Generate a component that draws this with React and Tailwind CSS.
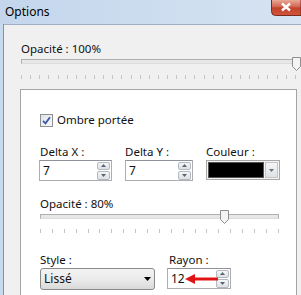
const Ticks = ({ count, className }) => (
  <div className={"flex justify-between " + className}>
    {Array.from({ length: count }).map((_, i) => (
      <div key={i} className="w-px h-[4px] bg-[#c4c4c4]" />
    ))}
  </div>
);

const Thumb = () => (
  <svg width="9" height="14" viewBox="0 0 9 14">
    <path d="M0.5 0.5 H8.5 V9.5 L4.5 13.5 L0.5 9.5 Z" fill="#f4f4f4" stroke="#8e8f8f" />
  </svg>
);

const Spinner = () => (
  <div className="flex flex-col w-[13px] h-[18px] gap-px">
    <div className="flex-1 flex items-center justify-center border border-[#b4b9c0] rounded-[2px] bg-linear-to-b from-[#f5f6f7] to-[#dde1e6]">
      <svg width="5" height="3" viewBox="0 0 5 3"><path d="M0 3 L2.5 0 L5 3 Z" fill="#5a6470" /></svg>
    </div>
    <div className="flex-1 flex items-center justify-center border border-[#b4b9c0] rounded-[2px] bg-linear-to-b from-[#f5f6f7] to-[#dde1e6]">
      <svg width="5" height="3" viewBox="0 0 5 3"><path d="M0 0 L2.5 3 L5 0 Z" fill="#5a6470" /></svg>
    </div>
  </div>
);

const NumBox = ({ value, width, children }) => (
  <div className={"relative flex items-center justify-between h-[21px] border border-[#abadb3] border-t-[#8e939b] bg-white pl-[3px] pr-px " + width}>
    <span className="leading-none text-[12px]">{value}</span>
    {children}
    <Spinner />
  </div>
);

const CloseButton = () => (
  <svg className="absolute top-0 right-0" width="30" height="16" viewBox="0 0 30 16">
    <defs>
      <linearGradient id="cb" x1="0" y1="0" x2="0" y2="1">
        <stop offset="0" stopColor="#e9a796" />
        <stop offset="0.45" stopColor="#d0654f" />
        <stop offset="0.5" stopColor="#c3412a" />
        <stop offset="1" stopColor="#d2553c" />
      </linearGradient>
    </defs>
    <path d="M0.5 0 V11.5 Q0.5 15.5 4.5 15.5 H30 V0" fill="url(#cb)" stroke="#7a2a1e" />
    <path d="M11 3.5 L19 10.5 M19 3.5 L11 10.5" stroke="#fff" strokeWidth="2.4" />
  </svg>
);

export default function App() {
  return (
    <div className="w-[301px] h-[295px] overflow-hidden bg-[#c8daee] text-[11.5px] text-[#111] font-['Noto_Sans','Open_Sans',sans-serif] relative">
      {/* title bar */}
      <div className="relative h-[24px] flex items-center pl-[5px] bg-linear-to-r from-[#c3d6ec] to-[#d6e3f2] text-[12px] text-black">
        Options
        <CloseButton />
      </div>

      <div className="flex h-[271px]">
        <div className="w-[4px] border-r border-[#7d94ad]" />
        <div className="flex-1 bg-[#f0f0f0] border-t border-[#9fb0c2] pl-[17px] pt-[15px] flex flex-col">
          <div className="leading-[17px]">Opacité : 100%</div>
          {/* top slider */}
          <div className="relative mt-[1px] h-[14px] w-[280px]">
            <div className="absolute left-0 top-[1px] w-[275px] h-[5px] border border-[#b0b0b0] border-b-[#dcdcdc] bg-[#e7e7e7]" />
            <div className="absolute left-[271px] top-[-1px]"><Thumb /></div>
          </div>
          <Ticks count={31} className="mt-[3px] w-[275px]" />

          {/* white panel */}
          <div className="mt-[10px] ml-[-1px] w-[277px] flex-1 bg-white border border-b-0 border-[#a5a5a5] pl-[19px] pt-[23px] flex flex-col">
            <label className="flex items-center gap-[4px] h-[14px]">
              <span className="w-[13px] h-[13px] border border-[#8f8f8f] bg-linear-to-br from-[#dfe4ea] to-[#f7f8fa] flex items-center justify-center">
                <svg width="9" height="9" viewBox="0 0 9 9">
                  <path d="M1 4.8 L3.5 7.3 L8 1.2" fill="none" stroke="#3a5ba0" strokeWidth="1.8" />
                </svg>
              </span>
              <span className="leading-none">Ombre portée</span>
            </label>

            <div className="flex mt-[16px]">
              <div className="w-[85px] flex flex-col">
                <div className="leading-[17px]">Delta X :</div>
                <NumBox value="7" width="w-[73px] ml-[-1px]" />
              </div>
              <div className="w-[81px] flex flex-col">
                <div className="leading-[17px]">Delta Y :</div>
                <NumBox value="7" width="w-[68px]" />
              </div>
              <div className="flex flex-col">
                <div className="leading-[17px]">Couleur :</div>
                <div className="flex items-center h-[20px] w-[74px] border border-[#a8a8a8] p-px gap-px bg-[#f4f4f4]">
                  <div className="w-[56px] h-full bg-black border border-[#555]" />
                  <div className="flex-1 h-full flex items-center justify-center border border-[#c2c6cc] bg-linear-to-b from-[#f4f5f6] to-[#dfe2e6]">
                    <svg width="5" height="3" viewBox="0 0 5 3"><path d="M0 0 L2.5 3 L5 0 Z" fill="#6a7480" /></svg>
                  </div>
                </div>
              </div>
            </div>

            <div className="mt-[14px] leading-[17px]">Opacité : 80%</div>
            <div className="relative mt-[1px] h-[14px] w-[240px]">
              <div className="absolute left-0 top-[1px] w-[239px] h-[5px] border border-[#b0b0b0] border-b-[#dcdcdc] bg-[#e7e7e7]" />
              <div className="absolute left-[180px] top-[-3px]"><Thumb /></div>
            </div>
            <Ticks count={21} className="mt-[2px] w-[239px]" />

            <div className="flex mt-[18px]">
              <div className="w-[127px] flex flex-col">
                <div className="leading-[17px]">Style :</div>
                <div className="flex items-center justify-between h-[22px] w-[115px] border border-[#8a8a8a] rounded-[3px] bg-linear-to-b from-[#f3f3f3] via-[#ebebeb] to-[#d9d9d9] pl-[3px] pr-[3px]">
                  <span className="leading-none text-[12px]">Lissé</span>
                  <svg width="7" height="4" viewBox="0 0 7 4"><path d="M0 0 L3.5 4 L7 0 Z" fill="#000" /></svg>
                </div>
              </div>
              <div className="flex flex-col">
                <div className="leading-[17px] pl-[2px]">Rayon :</div>
                <NumBox value="12" width="w-[64px]">
                  <svg className="absolute left-[17px] top-[5px]" width="34" height="10" viewBox="0 0 34 10">
                    <path d="M9 5 H33" stroke="#e01414" strokeWidth="3" />
                    <path d="M0 5 L10 0 L10 10 Z" fill="#e01414" />
                  </svg>
                </NumBox>
              </div>
            </div>
          </div>
        </div>
      </div>
    </div>
  );
}
